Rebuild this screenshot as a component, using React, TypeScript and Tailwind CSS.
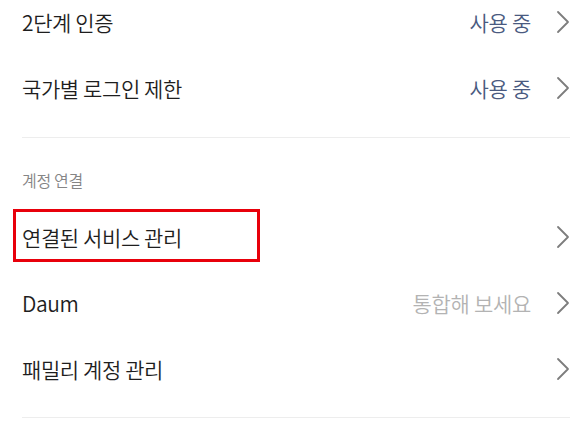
const Chevron = () => (
  <svg width="14" height="24" viewBox="0 0 14 24" fill="none" className="shrink-0">
    <polyline points="2,2 12,12 2,22" stroke="#7d7d7d" strokeWidth="1.8" strokeLinecap="round" strokeLinejoin="round" />
  </svg>
);

type RowProps = {
  label: string;
  value?: string;
  valueClass?: string;
};

const Row = ({ label, value, valueClass }: RowProps) => (
  <div className="flex h-[66px] items-center justify-between">
    <span className="text-[21px] font-[350] leading-6 tracking-[-0.4px] text-[#1e1e1e]">{label}</span>
    <div className="flex items-center gap-[25px]">
      {value && (
        <span className={`text-[21px] font-[350] leading-6 tracking-[-0.3px] ${valueClass}`}>{value}</span>
      )}
      <Chevron />
    </div>
  </div>
);

export default function App() {
  return (
    <div
      className="relative h-[442px] w-[584px] overflow-hidden bg-white"
      style={{ fontFamily: '"Noto Sans CJK KR", "Noto Sans", sans-serif' }}
    >
      <div className="-mt-[11px] pl-[22px] pr-[14px]">
        <Row label="2단계 인증" value="사용 중" valueClass="text-[#4a5a80]" />
        <Row label="국가별 로그인 제한" value="사용 중" valueClass="text-[#4a5a80]" />
        <div className="mt-[16px] h-px bg-[#ededed]" />

        <div className="pt-[32px] pb-[14px]">
          <div className="text-[16px] font-[350] leading-5 tracking-[-0.3px] text-[#858585]">계정 연결</div>
        </div>
        <Row label="연결된 서비스 관리" />
        <Row label="Daum" value="통합해 보세요" valueClass="text-[#b3b3b3]" />
        <Row label="패밀리 계정 관리" />
        <div className="mt-[15px] h-px bg-[#ededed]" />
      </div>

      {/* highlight box */}
      <div className="absolute left-[13px] top-[209px] h-[53px] w-[247px] border-[3px] border-[#e8000b]" />
    </div>
  );
}
